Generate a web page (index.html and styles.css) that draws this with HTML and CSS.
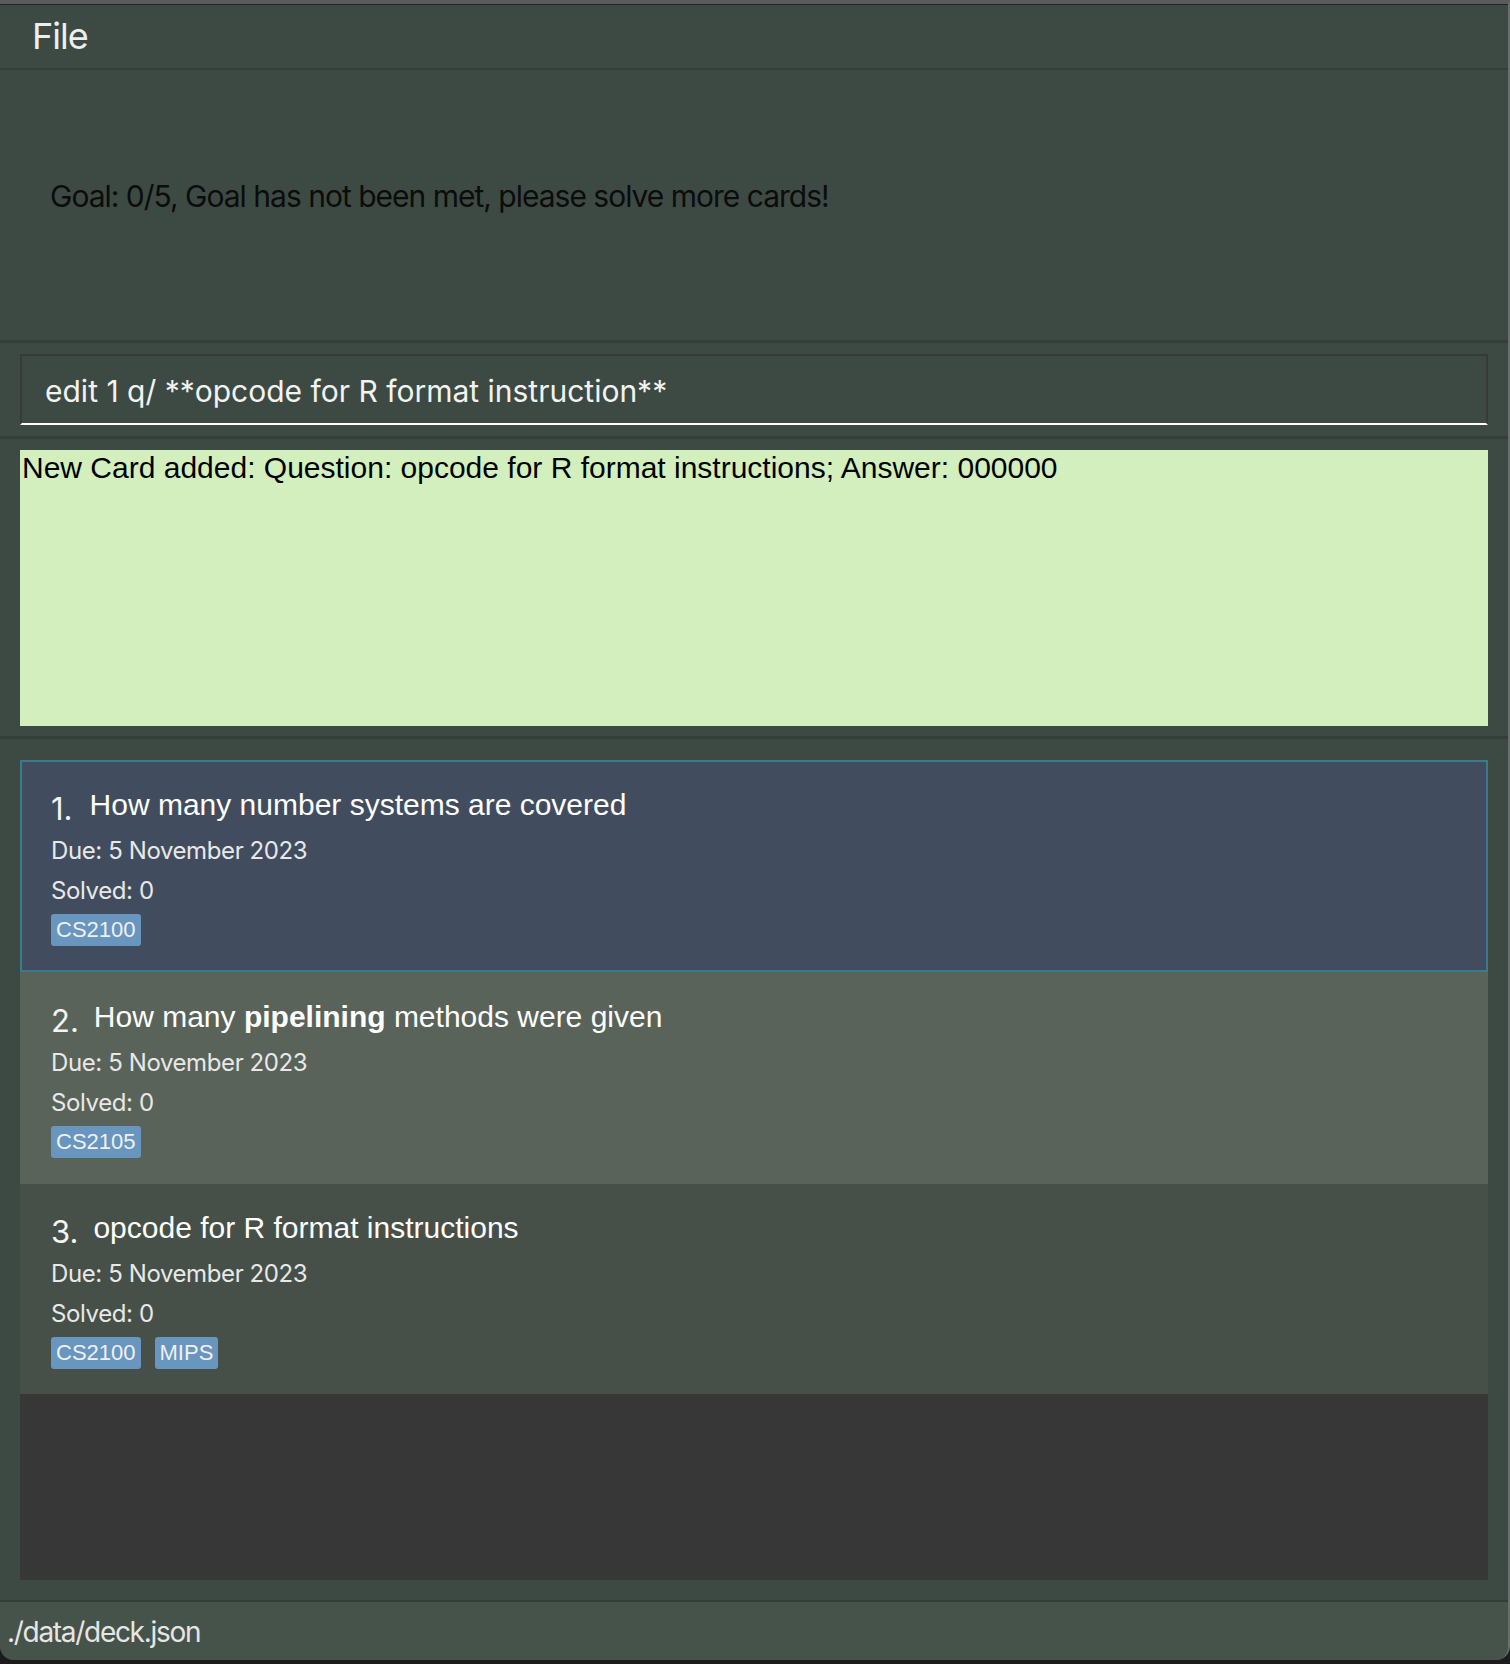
FILE: index.html
```html
<!DOCTYPE html>
<html>
<head>
<meta charset="utf-8">
<link rel="stylesheet" href="styles.css">
</head>
<body>
<div class="window">
  <div class="menubar"><span class="menu-item">File</span></div>
  <div class="goal">Goal: 0/5, Goal has not been met, please solve more cards!</div>
  <div class="command">
    <div class="input">edit 1 q/ **opcode for R format instruction**</div>
  </div>
  <div class="result">
    <div class="msg">New Card added: Question: opcode for R format instructions; Answer: 000000</div>
  </div>
  <div class="list">
    <div class="card selected">
      <div class="title-row"><span class="num">1.</span><span class="q">How many number systems are covered</span></div>
      <div class="meta">Due: 5 November 2023</div>
      <div class="meta">Solved: 0</div>
      <div class="tags"><span class="tag">CS2100</span></div>
    </div>
    <div class="card alt">
      <div class="title-row"><span class="num">2.</span><span class="q">How many <b>pipelining</b> methods were given</span></div>
      <div class="meta">Due: 5 November 2023</div>
      <div class="meta">Solved: 0</div>
      <div class="tags"><span class="tag">CS2105</span></div>
    </div>
    <div class="card plain">
      <div class="title-row"><span class="num">3.</span><span class="q">opcode for R format instructions</span></div>
      <div class="meta">Due: 5 November 2023</div>
      <div class="meta">Solved: 0</div>
      <div class="tags"><span class="tag">CS2100</span><span class="tag">MIPS</span></div>
    </div>
    <div class="empty"></div>
  </div>
  <div class="status">./data/deck.json</div>
</div>
</body>
</html>
```
FILE: styles.css
```css
html, body {
  margin: 0;
  padding: 0;
  background: #1c1c1e;
}
body {
  width: 1510px;
  height: 1664px;
  overflow: hidden;
}
.window {
  width: 1508px;
  height: 1656px;
  background: #3d4a43;
  border-top: 4px solid #5b5a5e;
  border-right: 2px solid #6b6e6c;
  border-radius: 0 0 14px 14px;
  overflow: hidden;
  display: flex;
  flex-direction: column;
  font-family: Inter, "Liberation Sans", sans-serif;
}
.menubar {
  height: 63px;
  flex: none;
  border-top: 1px solid #202422;
  border-bottom: 2px solid #343f38;
  line-height: 63px;
  padding-left: 32px;
  font-size: 36px;
  color: #eeeeee;
  letter-spacing: -1px;
}
.goal {
  height: 270px;
  flex: none;
  box-sizing: border-box;
  padding: 108px 0 0 50px;
  font-size: 30px;
  line-height: 36px;
  color: #0c0c0c;
  letter-spacing: -1px;
}
.command {
  height: 96px;
  flex: none;
  box-sizing: border-box;
  border-top: 3px solid #343f38;
  padding: 11px 20px 0 20px;
}
.input {
  height: 71px;
  box-sizing: border-box;
  border: 2px solid #393939;
  border-bottom: 2px solid #ffffff;
  padding: 4px 0 0 23px;
  font-size: 30px;
  line-height: 63px;
  color: #f2f2f2;
  letter-spacing: 0;
}
.result {
  height: 300px;
  flex: none;
  box-sizing: border-box;
  border-top: 3px solid #343f38;
  padding: 11px 20px 10px 20px;
}
.msg {
  height: 276px;
  background: #d3efbe;
  font-family: "Liberation Sans", Arial, sans-serif;
  font-size: 30px;
  line-height: 36px;
  color: #000000;
  padding-left: 2px;
}
.list {
  box-sizing: border-box;
  height: 866px;
  flex: none;
  border-top: 3px solid #343f38;
  border-bottom: 2px solid #343f38;
  padding: 21px 20px 0 20px;
  display: flex;
  flex-direction: column;
}
.card {
  border: 2px solid transparent;
  padding: 26px 29px 24px 29px;
  color: #ffffff;
}
.card.selected {
  background: #414d5f;
  border-color: #3a7a8d;
}
.card.selected .num {
  margin-right: 17px;
}
.card.alt {
  background: #59635a;
}
.card.plain {
  background: #465049;
  padding-top: 25px;
  padding-bottom: 23px;
}
.title-row {
  display: flex;
  align-items: flex-start;
  height: 43px;
}
.num {
  font-family: Inter, "Liberation Sans", sans-serif;
  font-size: 31px;
  line-height: 34px;
  margin-top: 4px;
  margin-right: 15px;
  color: #f4f4f4;
}
.q {
  font-family: "Liberation Sans", Arial, sans-serif;
  font-size: 30px;
  line-height: 34px;
  color: #ffffff;
}
.meta {
  font-size: 24px;
  line-height: 40px;
  color: #e8e8e8;
  letter-spacing: -0.4px;
}
.tags {
  display: flex;
  gap: 14px;
  margin-top: 3px;
}
.tag {
  height: 32px;
  line-height: 32px;
  padding: 0 5px;
  background: #6896be;
  border-radius: 3px;
  font-family: "Liberation Sans", Arial, sans-serif;
  font-size: 22px;
  color: #f0f0f0;
}
.empty {
  height: 186px;
  background: #373737;
}
.status {
  flex: 1;
  background: #46534b;
  padding: 2px 0 0 7px;
  font-size: 28px;
  line-height: 56px;
  color: #e6e6e6;
  letter-spacing: -1.3px;
}
```
